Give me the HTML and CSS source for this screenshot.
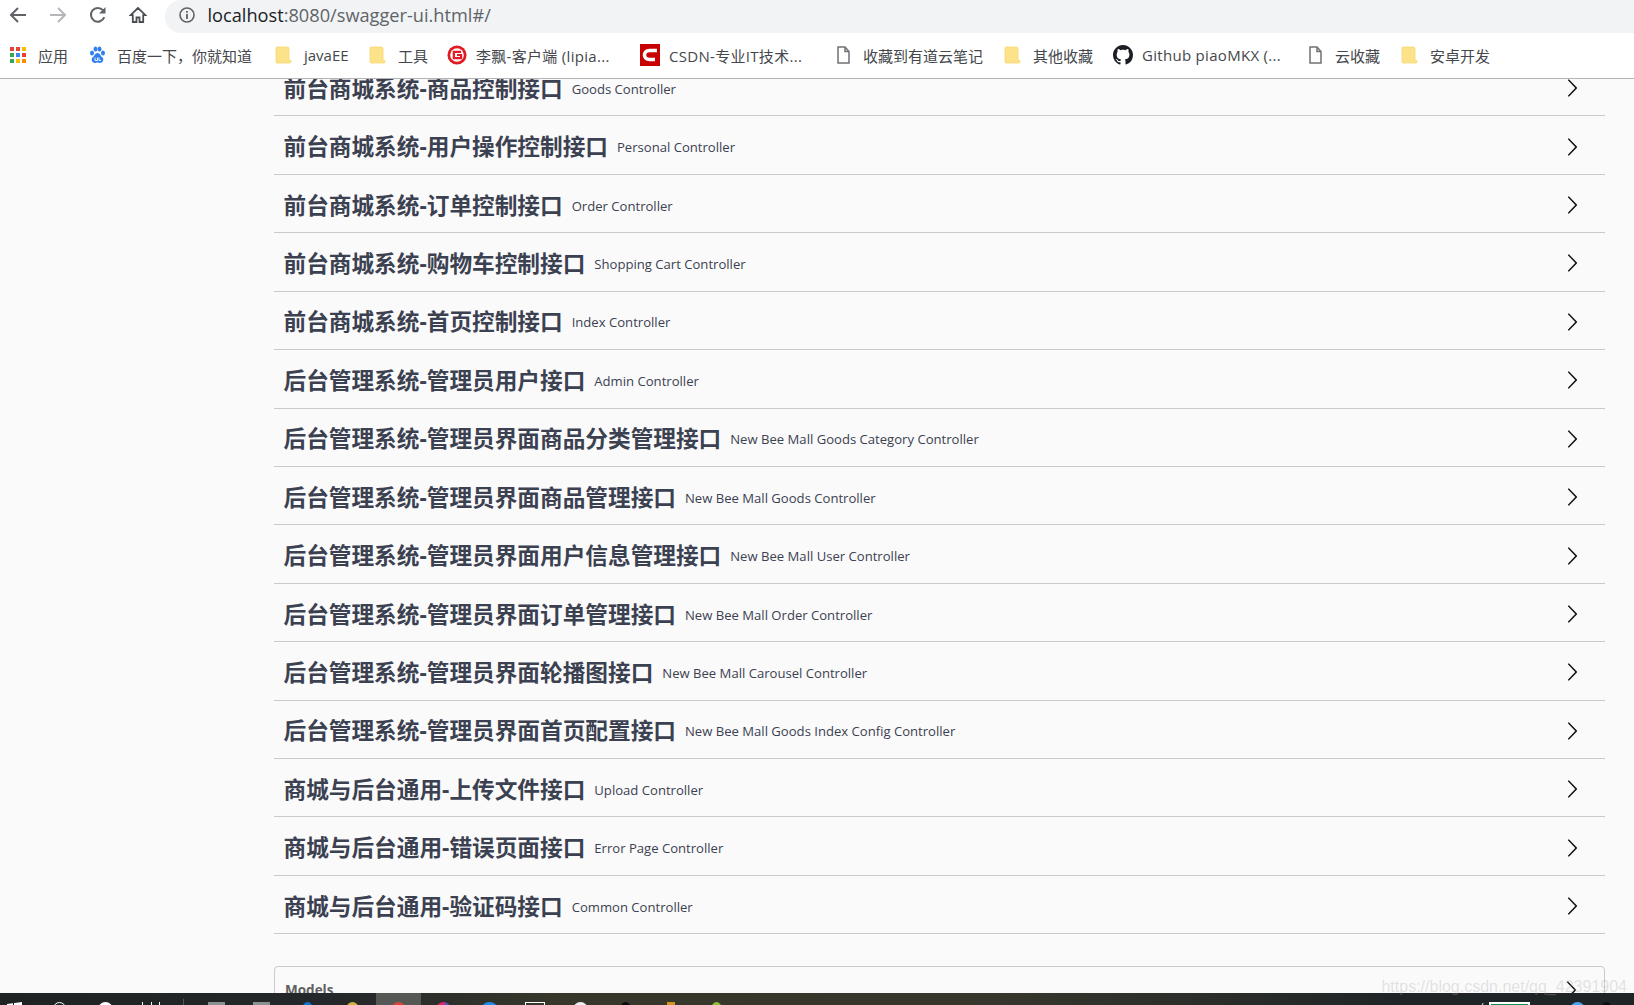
FILE: index.html
```html
<!DOCTYPE html>
<html lang="zh-CN">
<head>
  <meta charset="UTF-8" />
  <title>Swagger UI</title>
  <link rel="stylesheet" href="styles.css">
</head>
<body>
  <!-- BROWSER TOOLBAR -->
  <div class="toolbar">
    <div class="nav">
      <svg class="nav-icon" viewBox="0 0 18 18"><path d="M17 9H2.500M9 2 2 9l7 7" fill="none" stroke="#5f6368" stroke-width="2"/></svg>
      <svg class="nav-icon" viewBox="0 0 18 18"><path d="M1 9h14.500M9 2l7 7-7 7" fill="none" stroke="#b4b6b9" stroke-width="2"/></svg>
      <svg class="nav-icon" viewBox="0 0 18 18"><path d="M15.300 11.200A6.900 6.900 0 1 1 14 4.200" fill="none" stroke="#5f6368" stroke-width="2"/><path d="M16.500 1v6.500H10z" fill="#5f6368"/></svg>
      <svg class="nav-icon" viewBox="0 0 18 18"><path d="M9 2 1.500 9.200h2.300V16h3.700v-4.500h3V16h3.700V9.200h2.300z" fill="none" stroke="#4b4e52" stroke-width="1.800"/></svg>
    </div>
    <div class="address">
      <svg class="info" viewBox="0 0 16 16"><circle cx="8" cy="8" r="7" fill="none" stroke="#5f6368" stroke-width="1.600"/><path d="M7.100 7h1.800v5H7.100zM7.100 4h1.800v1.800H7.100z" fill="#5f6368"/></svg>
      <span class="host">localhost</span><span class="path">:8080/swagger-ui.html#/</span>
    </div>
  </div>

  <!-- BOOKMARKS -->
  <div class="bookmarks">
    <a class="mark">
      <svg class="mark-icon" viewBox="0 0 18 18"><rect x="1" y="1" width="4" height="4" fill="#ea4335"/><rect x="7" y="1" width="4" height="4" fill="#ea4335"/><rect x="13" y="1" width="4" height="4" fill="#fbbc05"/><rect x="1" y="7" width="4" height="4" fill="#34a853"/><rect x="7" y="7" width="4" height="4" fill="#4285f4"/><rect x="13" y="7" width="4" height="4" fill="#ea4335"/><rect x="1" y="13" width="4" height="4" fill="#34a853"/><rect x="7" y="13" width="4" height="4" fill="#fbbc05"/><rect x="13" y="13" width="4" height="4" fill="#fb8c00"/></svg>
      应用
    </a>
    <a class="mark">
      <svg class="mark-icon" viewBox="0 0 18 18"><g fill="#2f7ff0"><ellipse cx="4" cy="7" rx="2" ry="2.600"/><ellipse cx="7.500" cy="3" rx="2" ry="2.600"/><ellipse cx="11.500" cy="3" rx="2" ry="2.600"/><ellipse cx="15" cy="7" rx="2" ry="2.600"/><path d="M9.500 7c2.500 0 3 3 5 4.500 1.500 1.300 1 5.500-2.500 5.500-1 0-1.500-.5-2.500-.5s-1.500.5-2.500.5c-3.500 0-4-4.200-2.500-5.500 2-1.500 2.500-4.500 5-4.500z"/></g><path d="M7 11.500v3h2.500v-3M11 11.500v3h2" fill="none" stroke="#fff" stroke-width=".9"/></svg>
      百度一下，你就知道
    </a>
    <a class="mark"><svg class="mark-icon"><use href="#folder"/></svg>javaEE</a>
    <a class="mark"><svg class="mark-icon"><use href="#folder"/></svg>工具</a>
    <a class="mark wide">
      <svg class="mark-icon gee" viewBox="0 0 22 22"><circle cx="11" cy="11" r="10.500" fill="#e01b22"/><circle cx="11" cy="11" r="7.500" fill="#fff"/><path d="M15.500 7.500h-8v7h8V11H11" fill="none" stroke="#e01b22" stroke-width="2.400"/></svg>
      李飘-客户端 (lipia...
    </a>
    <a class="mark wide">
      <svg class="mark-icon csdn" viewBox="0 0 20 22"><rect width="20" height="22" fill="#c90000"/><path d="M17 6.500H9.500C6 6.500 4.500 9 4.500 11s1.500 4.500 5 4.500H15" fill="none" stroke="#fff" stroke-width="3.600"/></svg>
      CSDN-专业IT技术...
    </a>
    <a class="mark"><svg class="mark-icon"><use href="#doc"/></svg>收藏到有道云笔记</a>
    <a class="mark"><svg class="mark-icon"><use href="#folder"/></svg>其他收藏</a>
    <a class="mark wide">
      <svg class="mark-icon github" viewBox="0 0 16 16"><path fill="#1b1f23" d="M8 0C3.580 0 0 3.580 0 8c0 3.540 2.290 6.530 5.470 7.590.4.070.55-.17.55-.38 0-.19-.01-.82-.01-1.490-2.010.37-2.530-.49-2.690-.94-.09-.23-.48-.94-.82-1.130-.28-.15-.68-.52-.01-.53.63-.01 1.080.58 1.230.82.72 1.210 1.870.87 2.330.66.070-.52.28-.87.51-1.070-1.780-.2-3.640-.89-3.640-3.950 0-.87.31-1.590.82-2.150-.08-.2-.36-1.020.08-2.120 0 0 .67-.21 2.200.82.64-.18 1.320-.27 2-.27s1.360.09 2 .27c1.530-1.040 2.200-.82 2.200-.82.44 1.100.16 1.920.08 2.120.51.56.82 1.270.82 2.150 0 3.070-1.870 3.750-3.650 3.950.29.25.54.73.54 1.480 0 1.070-.01 1.930-.01 2.200 0 .21.15.46.55.38A8.013 8.013 0 0 0 16 8c0-4.420-3.580-8-8-8z"/></svg>
      Github piaoMKX (...
    </a>
    <a class="mark"><svg class="mark-icon"><use href="#doc"/></svg>云收藏</a>
    <a class="mark"><svg class="mark-icon"><use href="#folder"/></svg>安卓开发</a>
  </div>

  <!-- shared icons -->
  <svg class="defs" aria-hidden="true">
    <symbol id="folder" viewBox="0 0 18 18"><path d="M2 1h10.500c1 0 1.500.6 1.500 1.500v11.500l2 .5V16c0 .6-.5 1-1 1H2c-.7 0-1-.5-1-1V2c0-.6.4-1 1-1z" fill="#fce38a" stroke="#f6d875" stroke-width=".8"/></symbol>
    <symbol id="doc" viewBox="0 0 18 18"><path d="M4 1h7l4 4.500V17H4zM11 1v4.500h4" fill="none" stroke="#6f7276" stroke-width="1.500"/></symbol>
    <symbol id="arrow" viewBox="0 0 20 20"><path d="M13.250 10 6.109 2.580c-.268-.27-.268-.707 0-.979.268-.27.701-.27.969 0l7.830 7.908c.268.271.268.709 0 .979l-7.830 7.908c-.268.271-.701.27-.969 0-.268-.269-.268-.707 0-.979L13.250 10z"/></symbol>
  </svg>

  <!-- SWAGGER PAGE -->
  <main class="page">
    <div class="tags">
      <div class="tag"><h4>前台商城系统-商品控制接口</h4><small>Goods Controller</small><svg class="arrow"><use href="#arrow"/></svg></div>
      <div class="tag"><h4>前台商城系统-用户操作控制接口</h4><small>Personal Controller</small><svg class="arrow"><use href="#arrow"/></svg></div>
      <div class="tag"><h4>前台商城系统-订单控制接口</h4><small>Order Controller</small><svg class="arrow"><use href="#arrow"/></svg></div>
      <div class="tag"><h4>前台商城系统-购物车控制接口</h4><small>Shopping Cart Controller</small><svg class="arrow"><use href="#arrow"/></svg></div>
      <div class="tag"><h4>前台商城系统-首页控制接口</h4><small>Index Controller</small><svg class="arrow"><use href="#arrow"/></svg></div>
      <div class="tag"><h4>后台管理系统-管理员用户接口</h4><small>Admin Controller</small><svg class="arrow"><use href="#arrow"/></svg></div>
      <div class="tag"><h4>后台管理系统-管理员界面商品分类管理接口</h4><small>New Bee Mall Goods Category Controller</small><svg class="arrow"><use href="#arrow"/></svg></div>
      <div class="tag"><h4>后台管理系统-管理员界面商品管理接口</h4><small>New Bee Mall Goods Controller</small><svg class="arrow"><use href="#arrow"/></svg></div>
      <div class="tag"><h4>后台管理系统-管理员界面用户信息管理接口</h4><small>New Bee Mall User Controller</small><svg class="arrow"><use href="#arrow"/></svg></div>
      <div class="tag"><h4>后台管理系统-管理员界面订单管理接口</h4><small>New Bee Mall Order Controller</small><svg class="arrow"><use href="#arrow"/></svg></div>
      <div class="tag"><h4>后台管理系统-管理员界面轮播图接口</h4><small>New Bee Mall Carousel Controller</small><svg class="arrow"><use href="#arrow"/></svg></div>
      <div class="tag"><h4>后台管理系统-管理员界面首页配置接口</h4><small>New Bee Mall Goods Index Config Controller</small><svg class="arrow"><use href="#arrow"/></svg></div>
      <div class="tag"><h4>商城与后台通用-上传文件接口</h4><small>Upload Controller</small><svg class="arrow"><use href="#arrow"/></svg></div>
      <div class="tag"><h4>商城与后台通用-错误页面接口</h4><small>Error Page Controller</small><svg class="arrow"><use href="#arrow"/></svg></div>
      <div class="tag"><h4>商城与后台通用-验证码接口</h4><small>Common Controller</small><svg class="arrow"><use href="#arrow"/></svg></div>
    </div>
    <section class="models">
      <h4>Models</h4>
      <svg class="arrow"><use href="#arrow"/></svg>
    </section>
  </main>

  <!-- WINDOWS TASKBAR -->
  <footer class="taskbar">
    <span class="tb win"></span>
    <span class="tb"><i class="ring"></i></span>
    <span class="tb"><i class="dome white"></i></span>
    <span class="tb"><i class="view"></i></span>
    <span class="sep"></span>
    <span class="tb"><i class="slab"></i></span>
    <span class="tb"><i class="slab"></i></span>
    <span class="tb"><i class="dome blue"></i></span>
    <span class="tb"><i class="dome gold"></i></span>
    <span class="tb active"><i class="dome red"></i></span>
    <span class="tb"><i class="dome pink"></i></span>
    <span class="tb"><i class="dome sky"></i></span>
    <span class="tb"><i class="frame"></i></span>
    <span class="tb"><i class="dome pale"></i></span>
    <span class="tb"><i class="dome black"></i></span>
    <span class="tb"><i class="slab orange"></i></span>
    <span class="tb"><i class="dome lime"></i></span>
    <div class="tray">
      <i class="caret"></i>
      <i class="battery"></i>
      <i class="dome sky"></i>
      <i class="dome black"></i>
    </div>
  </footer>

  <div class="watermark">https://blog.csdn.net/qq_42391904</div>
</body>
</html>
```

FILE: styles.css
```css
:root {
  --text: #3b4151;
  --line: #c9cacd;
  --sans: 'Open Sans', 'Noto Sans CJK SC', sans-serif;
}
* { margin:0; padding:0; box-sizing:border-box; }
html, body { height:100%; overflow:hidden; }
body {
  display:flex; flex-direction:column; position:relative;
  background:#fafafa; color:var(--text); font-family:var(--sans);
}
.defs { display:none; }

/* TOOLBAR */
.toolbar { display:flex; height:33px; flex:none; background:#fff; }
.nav { display:flex; width:165px; flex:none; padding:6px 0 0 9px; gap:22px; }
.nav-icon { width:18px; height:18px; }
.address {
  flex:1; display:flex; align-items:center; padding:0 0 3px 14px;
  background:#f1f3f4; border-radius:16px 0 0 16px;
  font-size:18.2px; white-space:nowrap;
}
.info { width:16px; height:16px; margin-right:12.5px; }
.host { color:#202124; }
.path { color:#5f6368; }

/* BOOKMARKS */
.bookmarks {
  height:46px; flex:none; padding:0 0 1px 9px;
  display:grid; align-items:center;
  grid-template-columns:79px 187px 94px 78px 193px 194px 170px 109px 193px 95px 1fr;
  background:#fff; border-bottom:1px solid #b4b4b4;
  font-size:15px; color:#44474b;
}
.mark { display:flex; align-items:center; gap:11px; white-space:nowrap; }
.mark.wide { letter-spacing:.3px; gap:9px; }
.mark-icon { width:18px; height:18px; flex:none; }
.gee { width:20px; height:20px; }
.csdn { width:20px; height:22px; }
.github { width:20px; height:20px; }

/* SWAGGER */
.page { flex:1; min-height:0; overflow:hidden; padding:0 29px 0 274px; }
.tags { margin-top:-21px; }
.tag {
  display:flex; align-items:center; height:58.43px; padding:3px 23.5px 0 9.5px;
  border-bottom:1px solid var(--line);
}
.tag h4 { font-size:22.67px; font-weight:700; white-space:nowrap; margin-bottom:2px; }
.tag small { font-size:13.1px; margin:1px 0 0 9px; white-space:nowrap; }
.arrow { width:20px; height:20px; margin-left:auto; flex:none; fill:#111; }
.models {
  display:flex; margin-top:32px; height:60px; padding:14px 23.5px 0 10px;
  border:1px solid var(--line); border-radius:4px;
}
.models h4 { font-size:13.5px; font-weight:700; color:#606060; }
.models .arrow { margin-top:-1px; }

/* TASKBAR */
.taskbar {
  height:12px; flex:none; overflow:hidden; display:flex; position:relative;
  background:linear-gradient(90deg,#1e2223 0,#24282a 340px,#37372b 560px,#36362c 1000px,#1f2527 1400px);
}
.tb { width:45.5px; flex:none; padding-top:9px; display:flex; justify-content:center; }
.tb.win { width:37px; justify-content:flex-start; padding-left:7px; }
.tb.win::before {
  content:''; width:15px; height:10px;
  background:linear-gradient(90deg,#fff 6px,#1e2223 6px,#1e2223 7px,#fff 7px);
  clip-path:polygon(0 2px,100% 0,100% 100%,0 100%);
}
.tb.active { background:#555855; }
.sep { width:1px; height:12px; margin:6px 10px 0 9px; background:#555; flex:none; }
.taskbar i { display:block; flex:none; }
.ring { width:13px; height:13px; border:1px solid #fff; border-radius:50%; }
.dome { width:15px; height:15px; border-radius:50%; }
.white { background:#fff; }
.blue { width:11px; background:#0c74d1; }
.gold { width:13px; background:#d4b13c; }
.red { background:#d5483d; }
.pink { background:linear-gradient(90deg,#e0256f 60%,#4d55c0 60%); }
.sky { width:17px; background:#1f8df0; }
.pale { background:#eee; }
.black { width:11px; background:#0c0c0c; }
.lime { width:11px; background:#8fbf2f; }
.view { width:18px; height:12px; border-left:1px solid #fff; border-right:1px solid #fff; position:relative; }
.view::after { content:''; position:absolute; left:8px; top:0; width:1px; height:12px; background:#fff; }
.slab { width:17px; height:12px; background:#8c8f8f; }
.orange { width:8px; background:#d4951f; }
.frame { width:20px; height:12px; border:1px solid #fff; }
.tray { margin-left:auto; display:flex; padding-top:9px; }
.caret { width:6px; height:6px; margin:1px 2px 0 0; border-left:1px solid #ddd; transform:skewX(-30deg); }
.battery { width:41px; height:12px; background:#0f8f4b; border:2px solid #fff; margin-right:40px; }
.tray .sky { width:15px; margin-right:16px; background:#4aa3ee; }
.tray .black { margin-right:22px; }

/* WATERMARK */
.watermark {
  position:absolute; right:7px; top:978px;
  font:16px 'Liberation Sans', sans-serif; color:rgba(170,170,170,.32);
  white-space:nowrap; pointer-events:none;
}
```
